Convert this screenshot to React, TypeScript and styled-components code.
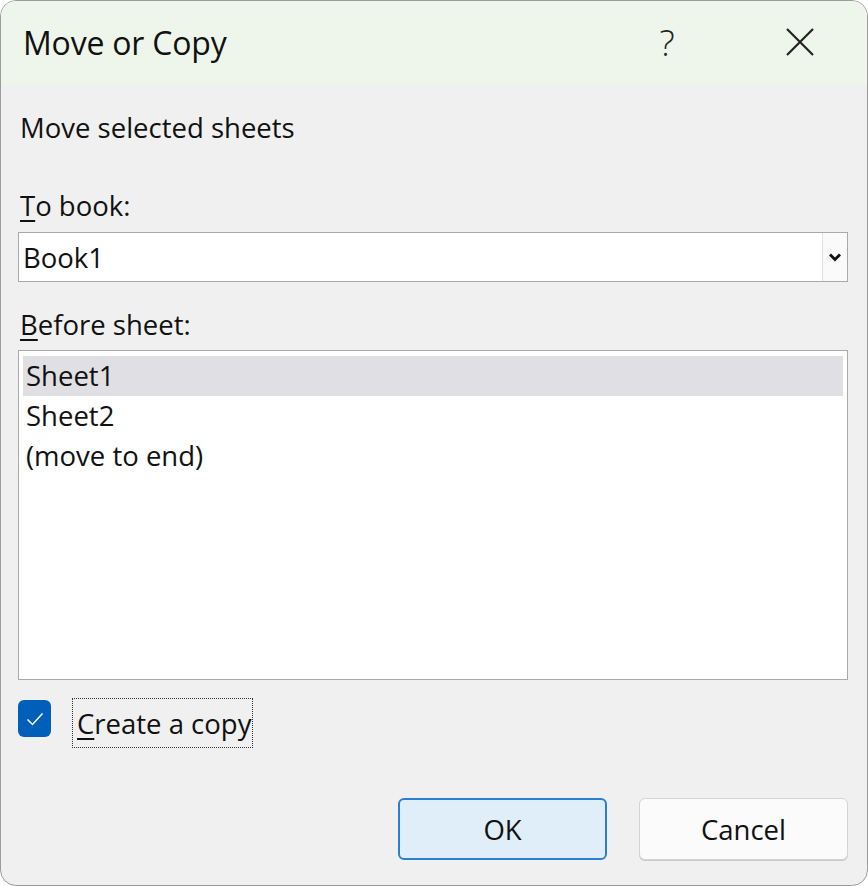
import React from "react";
import styled, { createGlobalStyle } from "styled-components";

const Global = createGlobalStyle`
  html, body { margin: 0; padding: 0; background: #ffffff; }
  body { font-family: "Open Sans", "Noto Sans", "Liberation Sans", sans-serif; color: #1a1a1a; }
  * { box-sizing: border-box; }
`;

const Window = styled.div`
  width: 868px;
  height: 886px;
  border: 1.5px solid #9c9c9c;
  border-radius: 16px;
  overflow: hidden;
  background: #f0f0f0;
  display: flex;
  flex-direction: column;
`;

const TitleBar = styled.div`
  height: 84px;
  background: #eef6ec;
  display: flex;
  align-items: center;
  padding-left: 22px;
  padding-bottom: 2px;
`;

const Title = styled.div`
  font-size: 32px;
  letter-spacing: -0.2px;
  flex: 1;
  color: #111;
`;

const TitleButton = styled.div<{ $w: number; $size?: number }>`
  width: ${(p) => p.$w}px;
  height: 60px;
  display: flex;
  align-items: center;
  justify-content: center;
  font-size: ${(p) => p.$size ?? 30}px;
  font-weight: 300;
  color: #222;
`;

const Body = styled.div`
  flex: 1;
  display: flex;
  flex-direction: column;
  padding: 0 19px 0 17px;
`;

const Text = styled.div<{ $mt: number }>`
  margin-top: ${(p) => p.$mt}px;
  font-size: 27.5px;
  line-height: 34px;
  padding-left: 2px;
  color: #111;
`;

const U = styled.span`
  text-decoration: underline;
  text-underline-offset: 4px;
  text-decoration-thickness: 1.5px;
`;

const Select = styled.div`
  margin-top: 9px;
  height: 50px;
  background: #ffffff;
  border: 1.5px solid #a9a9a9;
  display: flex;
  align-items: center;
`;

const SelectValue = styled.div`
  flex: 1;
  font-size: 27.5px;
  padding-left: 4px;
  color: #111;
`;

const SelectButton = styled.div`
  width: 25px;
  height: 100%;
  border-left: 1.5px solid #e3e3e3;
  display: flex;
  align-items: center;
  justify-content: center;
  background: #fafafa;
`;

const ListBox = styled.div`
  margin-top: 8px;
  height: 330px;
  background: #ffffff;
  border: 1.5px solid #a9a9a9;
  padding: 5px 4px;
  display: flex;
  flex-direction: column;
`;

const ListItem = styled.div<{ $selected?: boolean }>`
  height: 40px;
  line-height: 40px;
  font-size: 27.5px;
  padding-left: 3px;
  background: ${(p) => (p.$selected ? "#e0dfe4" : "transparent")};
  color: #111;
`;

const CheckRow = styled.div`
  margin-top: 18px;
  display: flex;
  align-items: flex-start;
  gap: 21px;
`;

const CheckBox = styled.div`
  margin-top: 2px;
  width: 33px;
  height: 37px;
  border-radius: 6px;
  background: #005fb8;
  display: flex;
  align-items: center;
  justify-content: center;
`;

const FocusLabel = styled.div`
  height: 50px;
  border: 1.5px dotted #333;
  padding: 0 1px 0 4px;
  display: flex;
  align-items: center;
  font-size: 27.5px;
  color: #111;
`;

const ButtonRow = styled.div`
  margin-top: 50px;
  display: flex;
  justify-content: flex-end;
  gap: 32px;
`;

const Button = styled.button<{ $primary?: boolean }>`
  width: 209px;
  height: 62px;
  border-radius: 6px;
  font-family: inherit;
  font-size: 27.5px;
  color: #111;
  background: ${(p) => (p.$primary ? "#e0eef9" : "#fbfbfb")};
  border: ${(p) => (p.$primary ? "2px solid #2b7fd0" : "1.5px solid #d4d4d4")};
  box-shadow: ${(p) => (p.$primary ? "none" : "0 1px 0 #c8c8c8")};
`;

export default function App() {
  return (
    <>
      <Global />
      <Window>
        <TitleBar>
          <Title>Move or Copy</Title>
          <TitleButton $w={132} $size={36}>?</TitleButton>
          <TitleButton $w={134}>
            <svg width="30" height="30" viewBox="0 0 30 30">
              <path d="M2 2 L28 28 M28 2 L2 28" stroke="#222" strokeWidth="2.2" fill="none" />
            </svg>
          </TitleButton>
        </TitleBar>
        <Body>
          <Text $mt={26}>Move selected sheets</Text>
          <Text $mt={44}>
            <U>T</U>o book:
          </Text>
          <Select>
            <SelectValue>Book1</SelectValue>
            <SelectButton>
              <svg width="14" height="10" viewBox="0 0 14 10">
                <path d="M2 2.5 L7 7.5 L12 2.5" stroke="#111" strokeWidth="2.8" fill="none" />
              </svg>
            </SelectButton>
          </Select>
          <Text $mt={26}>
            <U>B</U>efore sheet:
          </Text>
          <ListBox>
            <ListItem $selected>Sheet1</ListItem>
            <ListItem>Sheet2</ListItem>
            <ListItem>(move to end)</ListItem>
          </ListBox>
          <CheckRow>
            <CheckBox>
              <svg width="20" height="16" viewBox="0 0 20 16">
                <path d="M2.5 8.5 L7.5 13.5 L17.5 2.5" stroke="#ffffff" strokeWidth="1.5" fill="none" />
              </svg>
            </CheckBox>
            <FocusLabel>
              <span>
                <U>C</U>reate a copy
              </span>
            </FocusLabel>
          </CheckRow>
          <ButtonRow>
            <Button $primary>OK</Button>
            <Button>Cancel</Button>
          </ButtonRow>
        </Body>
      </Window>
    </>
  );
}
